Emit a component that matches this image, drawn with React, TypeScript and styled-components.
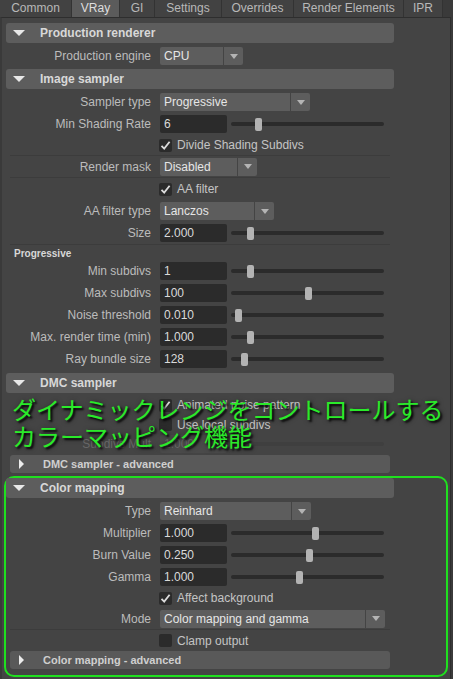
import React from "react";
import styled, { createGlobalStyle } from "styled-components";

// Tabs of the strip, with their widths
const TABS: { name: string; width: number }[] = [
  { name: "Common", width: 72 },
  { name: "VRay", width: 48 },
  { name: "GI", width: 35 },
  { name: "Settings", width: 67 },
  { name: "Overrides", width: 72 },
  { name: "Render Elements", width: 110 },
  { name: "IPR", width: 39 },
];
const ACTIVE_TAB = "VRay";

const App: React.FC = () => {
  return (
    <>
      <GlobalStyle />
      <TabBar>
        {TABS.map((t) => (
          <Tab key={t.name} $w={t.width} $active={t.name === ACTIVE_TAB}>
            {t.name}
          </Tab>
        ))}
      </TabBar>
      <Panel>
        <Column>
          {/* Production renderer */}
          <Header>
            <DownArrow />
            Production renderer
          </Header>
          <Body>
            <Row>
              <Label>Production engine</Label>
              <Dropdown value="CPU" width={83} />
            </Row>
          </Body>

          {/* Image sampler */}
          <Header>
            <DownArrow />
            Image sampler
          </Header>
          <Body $bottom={3}>
            <Row>
              <Label>Sampler type</Label>
              <Dropdown value="Progressive" width={150} />
            </Row>
            <SliderRow label="Min Shading Rate" value="6" pos={27} />
            <CheckRow label="Divide Shading Subdivs" checked h={20} />
            <Separator />
            <Row $h={21}>
              <Label>Render mask</Label>
              <Dropdown value="Disabled" width={97} />
            </Row>
            <Separator />
            <CheckRow label="AA filter" checked />
            <Row>
              <Label>AA filter type</Label>
              <Dropdown value="Lanczos" width={114} />
            </Row>
            <SliderRow label="Size" value="2.000" pos={19} />
            <Separator />
            <SubTitle>Progressive</SubTitle>
            <SliderRow label="Min subdivs" value="1" pos={19} />
            <SliderRow label="Max subdivs" value="100" pos={77} />
            <SliderRow label="Noise threshold" value="0.010" pos={7} />
            <SliderRow label="Max. render time (min)" value="1.000" pos={19} />
            <SliderRow label="Ray bundle size" value="128" pos={13} />
          </Body>

          {/* DMC sampler */}
          <Header>
            <DownArrow />
            DMC sampler
          </Header>
          <Body $top={2} $bottom={1}>
            <CheckRow label="Animated noise pattern" checked h={20} />
            <CheckRow label="Use local subdivs" h={19} />
            <SliderRow label="Subdivs Mult" value="1.000" pos={0} dim h={20} />
            <Caption>
              ダイナミックレンジをコントロールする
              <br />
              カラーマッピング機能
            </Caption>
          </Body>
          <SubHeader>
            <RightArrow />
            DMC sampler - advanced
          </SubHeader>
        </Column>

        {/* Color mapping, framed in green */}
        <Highlight>
          <Column>
            <Header>
              <DownArrow />
              Color mapping
            </Header>
            <Body $bottom={0}>
              <Row>
                <Label>Type</Label>
                <Dropdown value="Reinhard" width={151} />
              </Row>
              <SliderRow label="Multiplier" value="1.000" pos={84} />
              <SliderRow label="Burn Value" value="0.250" pos={78} />
              <SliderRow label="Gamma" value="1.000" pos={68} />
              <CheckRow label="Affect background" checked h={20} />
              <Row $h={21}>
                <Label>Mode</Label>
                <Dropdown value="Color mapping and gamma" width={225} />
              </Row>
              <Separator />
              <CheckRow label="Clamp output" h={21} />
            </Body>
            <SubHeader>
              <RightArrow />
              Color mapping - advanced
            </SubHeader>
          </Column>
        </Highlight>
      </Panel>
    </>
  );
};

export default App;

// 드롭다운
const Dropdown: React.FC<{ value: string; width: number }> = ({ value, width }) => (
  <DropBox $w={width}>
    <DropValue>{value}</DropValue>
    <DropButton />
  </DropBox>
);

// 숫자 입력 + 슬라이더
const SliderRow: React.FC<{ label: string; value: string; pos: number; dim?: boolean; h?: number }> = ({
  label,
  value,
  pos,
  dim,
  h,
}) => (
  <Row $h={h}>
    <Label $dim={dim}>{label}</Label>
    <NumberField $dim={dim}>{value}</NumberField>
    <Slider>
      <Track $dim={dim} />
      {!dim && <Thumb $pos={pos} />}
    </Slider>
  </Row>
);

const CheckRow: React.FC<{ label: string; checked?: boolean; h?: number }> = ({ label, checked, h }) => (
  <Row $h={h} $indent>
    <CheckBox>
      {checked && (
        <svg width="11" height="11" viewBox="0 0 11 11">
          <path d="M1.5 5.8 L4.2 8.6 L9.6 1.8" fill="none" stroke="#dcdcdc" strokeWidth="1.8" />
        </svg>
      )}
    </CheckBox>
    <CheckText>{label}</CheckText>
  </Row>
);

const GlobalStyle = createGlobalStyle`
  body {
    margin: 0;
    background: #3a3a3a;
    font-family: "Liberation Sans", Arial, sans-serif;
    font-size: 12px;
    color: #bdbdbd;
    overflow: hidden;
  }
`;

const TabBar = styled.div`
  display: flex;
  height: 17px;
  background: #3a3a3a;
`;

const Tab = styled.div<{ $active?: boolean; $w: number }>`
  flex-shrink: 0;
  width: ${(p) => p.$w}px;
  box-sizing: border-box;
  text-align: center;
  white-space: nowrap;
  line-height: 17px;
  background: ${(p) => (p.$active ? "#5b5b5b" : "#424242")};
  color: ${(p) => (p.$active ? "#dedede" : "#b8b8b8")};
  border-right: 1px solid #333;
`;

const Panel = styled.div`
  margin-right: 2px;
  height: calc(100vh - 17px);
  box-sizing: border-box;
  background: #444;
  border-top: 1px solid #2e2e2e;
  border-left: 2px solid #3a3a3a;
  border-right: 1px solid #2e2e2e;
  padding: 5px 0 0 4px;
`;

const Column = styled.div`
  width: 388px;
  display: flex;
  flex-direction: column;
`;

const Header = styled.div`
  display: flex;
  align-items: center;
  height: 20px;
  padding-left: 7px;
  background: #5d5d5d;
  border-radius: 3px;
  color: #d8d8d8;
  font-weight: bold;
`;

const DownArrow = styled.span`
  width: 0;
  height: 0;
  margin-right: 15px;
  border-left: 6px solid transparent;
  border-right: 6px solid transparent;
  border-top: 6px solid #e8e8e8;
`;

const SubHeader = styled.div`
  display: flex;
  align-items: center;
  height: 18px;
  margin: 0 4px;
  padding-left: 9px;
  background: #595959;
  border-radius: 3px;
  color: #cfcfcf;
  font-weight: bold;
  font-size: 11px;
`;

const RightArrow = styled.span`
  width: 0;
  height: 0;
  margin-right: 19px;
  border-top: 5px solid transparent;
  border-bottom: 5px solid transparent;
  border-left: 5px solid #ececec;
`;

const Body = styled.div<{ $top?: number; $bottom?: number }>`
  position: relative;
  display: flex;
  flex-direction: column;
  padding-top: ${(p) => p.$top ?? 2}px;
  padding-bottom: ${(p) => p.$bottom ?? 2}px;
`;

const Row = styled.div<{ $h?: number; $indent?: boolean }>`
  display: flex;
  align-items: center;
  height: ${(p) => p.$h ?? 22}px;
  padding-left: ${(p) => (p.$indent ? 153 : 0)}px;
`;

const Label = styled.div<{ $dim?: boolean }>`
  width: 145px;
  margin-right: 9px;
  text-align: right;
  white-space: nowrap;
  color: ${(p) => (p.$dim ? "#686868" : "#bcbcbc")};
`;

const DropBox = styled.div<{ $w: number }>`
  display: flex;
  gap: 1px;
  width: ${(p) => p.$w}px;
  height: 18px;
`;

const DropValue = styled.div`
  flex: 1;
  padding-left: 4px;
  line-height: 18px;
  background: #5d5d5d;
  border-radius: 2px 0 0 2px;
  color: #e6e6e6;
  white-space: nowrap;
`;

const DropButton = styled.div`
  display: flex;
  align-items: center;
  justify-content: center;
  width: 19px;
  background: #5d5d5d;
  border-radius: 0 2px 2px 0;

  &::after {
    content: "";
    border-left: 4px solid transparent;
    border-right: 4px solid transparent;
    border-top: 5px solid #b4b4b4;
  }
`;

const NumberField = styled.div<{ $dim?: boolean }>`
  width: 63px;
  height: 18px;
  padding-left: 4px;
  line-height: 19px;
  background: ${(p) => (p.$dim ? "#4a4a4a" : "#2b2b2b")};
  border-radius: 2px;
  color: ${(p) => (p.$dim ? "#686868" : "#dadada")};
`;

const Slider = styled.div`
  position: relative;
  display: flex;
  align-items: center;
  width: 153px;
  height: 13px;
  margin-left: 4px;
`;

const Track = styled.div<{ $dim?: boolean }>`
  width: 100%;
  height: 4px;
  border-radius: 2px;
  background: ${(p) => (p.$dim ? "#3f3f3f" : "#2b2b2b")};
`;

const Thumb = styled.div<{ $pos: number }>`
  position: absolute;
  top: 0;
  left: ${(p) => p.$pos - 3}px;
  width: 7px;
  height: 13px;
  border-radius: 2px;
  background: #b3b3b3;
`;

const CheckBox = styled.div`
  display: flex;
  align-items: center;
  justify-content: center;
  width: 13px;
  height: 13px;
  background: #2b2b2b;
  border-radius: 2px;
`;

const CheckText = styled.span`
  margin-left: 5px;
  color: #c4c4c4;
`;

const Separator = styled.div`
  height: 1px;
  margin: 0 4px;
  background: #3c3c3c;
`;

const SubTitle = styled.div`
  height: 15px;
  padding-left: 8px;
  line-height: 18px;
  font-size: 10px;
  font-weight: bold;
  color: #d8d8d8;
`;

// 설명 문구 (화면 위에 겹쳐짐)
const Caption = styled.div`
  position: absolute;
  top: 2px;
  left: 6px;
  z-index: 5;
  white-space: nowrap;
  font-family: "Noto Sans CJK JP", sans-serif;
  font-size: 24px;
  line-height: 27px;
  color: #2aea2a;
  text-shadow: 2px 2px 2px rgba(0, 0, 0, 0.85), 1px 1px 5px rgba(0, 0, 0, 0.6);
`;

const Highlight = styled.div`
  margin: 3px 2px 0 -2px;
  padding-bottom: 6px;
  border: 2px solid #1fe01f;
  border-radius: 10px;
`;
